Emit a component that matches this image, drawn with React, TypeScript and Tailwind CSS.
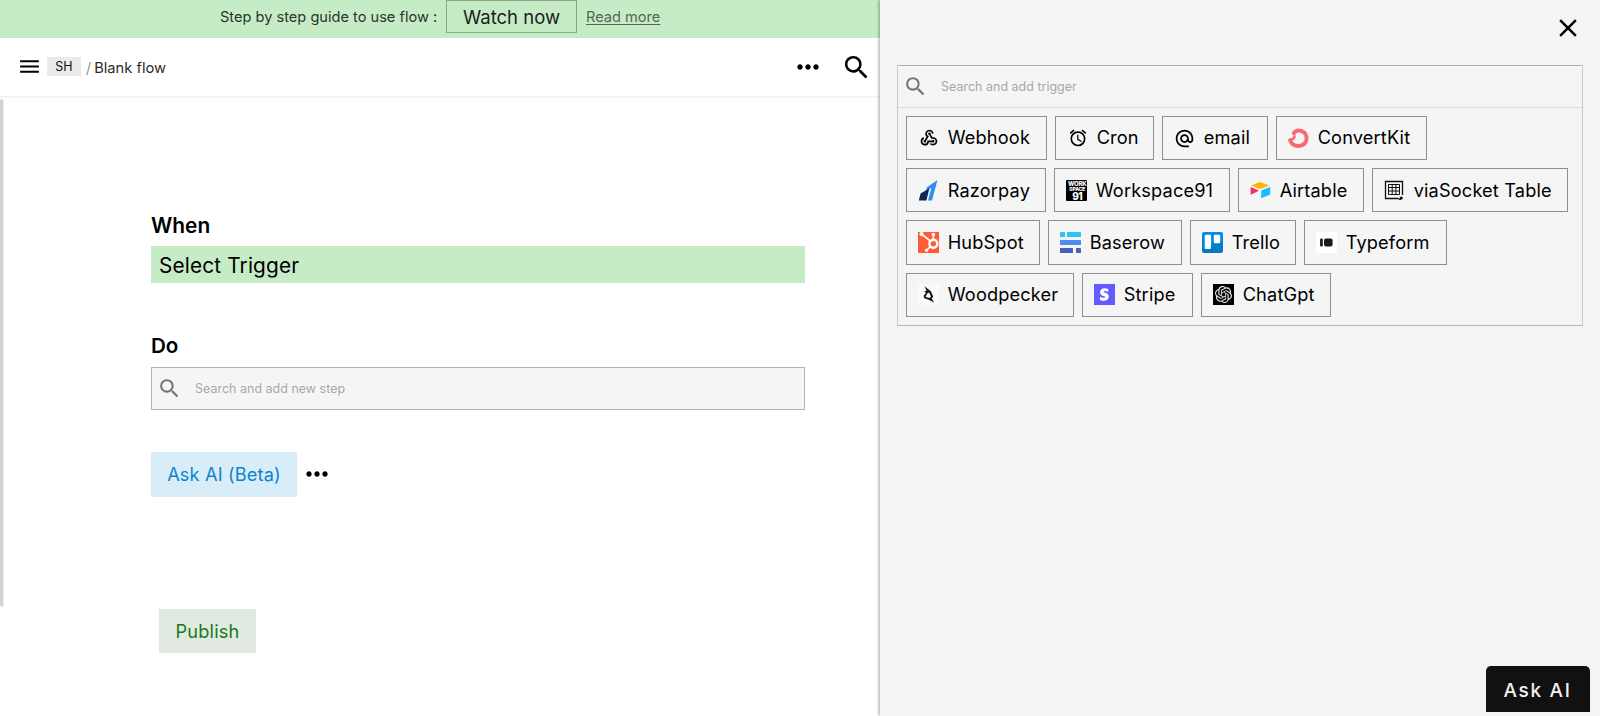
import React from "react";
import { MdMenu, MdSearch, MdMoreHoriz, MdWebhook, MdAlarm, MdAlternateEmail, MdClose } from "react-icons/md";
import { SiHubspot, SiOpenai } from "react-icons/si";

const Razorpay = () => (
  <svg viewBox="0 0 21 21" className="size-[21px]">
    <path d="M19.5 0 14 20.5H10L13.4 7.8 8 11.2 9 7.3Z" fill="#2f8ff5" />
    <path d="M2.6 13.4 11.4 8.2 8.4 20.5H0.8Z" fill="#0d2654" />
  </svg>
);

const Workspace = () => (
  <span className="flex h-[21px] w-[21px] flex-col overflow-hidden rounded-[1px] bg-black pl-[1.5px] text-white">
    <span className="mt-px h-[5px] text-[6px] leading-[6px] font-extrabold tracking-[-0.15px]">WORK</span>
    <span className="h-[5px] text-[5.2px] leading-[6px] font-extrabold tracking-[-0.2px]">SPACE</span>
    <span className="text-[10px] leading-[10px] font-extrabold tracking-[-0.5px]">91</span>
  </span>
);

const ConvertKit = () => (
  <svg viewBox="0 0 21 21" className="size-[21px]" fill="none" stroke="#fb6970" strokeLinecap="round">
    <path d="M5.9 5C7.2 3 9 2.4 10.9 2.4 15.2 2.4 18.6 5.8 18.6 10.2 18.6 14.6 15.2 18 10.8 18 6.6 18 3.2 15.6 2.2 12.2" strokeWidth="4" />
    <path d="M2 11.7C4.4 11.7 6 10.9 6.3 9" strokeWidth="2.6" />
    <path d="M5.5 5.2C6.4 6 6.7 7.5 6.5 9" strokeWidth="2" />
  </svg>
);

const Airtable = () => (
  <svg viewBox="0 0 21 21" className="size-[21px]">
    <path d="M10 2 19.3 5.4 10.3 9 1.2 5.5Z" fill="#fcb400" />
    <path d="M11.2 10.5 20.2 7V14.6L11.2 18.2Z" fill="#18bfff" />
    <path d="M0.7 7.1 9 10.7 0.7 14.7Z" fill="#f82b60" />
  </svg>
);

const SocketTable = () => (
  <svg viewBox="0 0 21 21" className="size-[21px]" fill="none" stroke="#111">
    <path d="M14.5 18.5H1.5V1.5H18.5V15" strokeWidth="1.3" />
    <path d="M4.5 4.5h11v10h-11zM4.5 7.5h11M4.5 11h11M8.2 4.5v10M11.9 4.5v10" strokeWidth="1" />
    <circle cx="17.2" cy="18" r="1.6" fill="#111" stroke="none" />
    <path d="M15 18.2v1.4h2" />
  </svg>
);

const HubSpot = () => (
  <span className="flex size-[21px] items-center justify-center bg-[#ff5c35] text-white">
    <SiHubspot size={20} />
  </span>
);

const Baserow = () => (
  <svg viewBox="0 0 21 21" className="size-[21px]">
    <rect width="5" height="5" rx=".6" fill="#2bc3f1" />
    <rect x="7" width="14" height="5" rx=".6" fill="#2bc3f1" />
    <rect y="8" width="21" height="5" rx=".6" fill="#4e8cf0" />
    <rect y="16" width="13" height="5" rx=".6" fill="#4362c0" />
    <rect x="16" y="16" width="5" height="5" rx=".6" fill="#4362c0" />
  </svg>
);

const Trello = () => (
  <svg viewBox="0 0 21 21" className="size-[21px]">
    <defs>
      <linearGradient id="trello" x1="0" y1="0" x2="0" y2="1">
        <stop stopColor="#0091e6" />
        <stop offset="1" stopColor="#0079bf" />
      </linearGradient>
    </defs>
    <rect width="21" height="21" rx="2" fill="url(#trello)" />
    <rect x="2.7" y="2.7" width="6.4" height="14.3" rx="1.2" fill="#fff" />
    <rect x="11.8" y="2.7" width="6.4" height="8.6" rx="1.2" fill="#fff" />
  </svg>
);

const Typeform = () => (
  <svg viewBox="0 0 21 21" className="size-[21px]">
    <rect width="21" height="21" fill="#fff" />
    <rect x="4.1" y="6.5" width="2.7" height="8" rx="1.3" fill="#191919" />
    <rect x="8" y="6.5" width="8.6" height="8" rx="2" fill="#191919" />
  </svg>
);

const Woodpecker = () => (
  <svg viewBox="0 0 21 21" className="size-[21px]">
    <rect width="21" height="21" fill="#fafafa" />
    <path d="M6.5 2.2 12.8 7.2 15.2 12.5 13.8 14.4 16 18.4 10.8 15.8 6.2 14.2 5.6 11.8 8 9 6.2 7.3 8.6 6.8Z" fill="#111" />
    <path d="M9.2 9.6 11.2 8.4 13 12.5 11.6 14 7.6 12.9Z" fill="#fafafa" />
  </svg>
);

const Stripe = () => (
  <svg viewBox="0 0 21 21" className="size-[21px]">
    <rect width="21" height="21" fill="#635bff" />
    <path
      d="M14.2 4.9V8C13 7.4 11.9 7.1 10.9 7.1 10.1 7.1 9.7 7.3 9.7 7.7 9.7 8.9 14.8 8.5 14.8 12.4 14.8 15.2 12.7 16.7 9.8 16.7 8.6 16.7 7.3 16.5 6 15.9V12.7C7.2 13.4 8.7 13.8 9.8 13.8 10.6 13.8 11.1 13.6 11.1 13.1 11.1 11.7 6.1 12.3 6.1 8.3 6.1 5.8 8 4.2 10.9 4.2 12 4.2 13.1 4.4 14.2 4.9Z"
      fill="#fff"
    />
  </svg>
);

const ChatGpt = () => (
  <span className="flex size-[21px] items-center justify-center bg-black text-[#eee]">
    <SiOpenai size={17} />
  </span>
);

type Chip = { name: string; width: string; icon: React.ReactNode };

const rows: Chip[][] = [
  [
    { name: "Webhook", width: "w-[141px]", icon: <MdWebhook size={20} /> },
    { name: "Cron", width: "w-[99px]", icon: <MdAlarm size={20} /> },
    { name: "email", width: "w-[106px]", icon: <MdAlternateEmail size={21} /> },
    { name: "ConvertKit", width: "w-[151px]", icon: <ConvertKit /> },
  ],
  [
    { name: "Razorpay", width: "w-[140px]", icon: <Razorpay /> },
    { name: "Workspace91", width: "w-[176px]", icon: <Workspace /> },
    { name: "Airtable", width: "w-[126px]", icon: <Airtable /> },
    { name: "viaSocket Table", width: "w-[196px]", icon: <SocketTable /> },
  ],
  [
    { name: "HubSpot", width: "w-[134px]", icon: <HubSpot /> },
    { name: "Baserow", width: "w-[134px]", icon: <Baserow /> },
    { name: "Trello", width: "w-[106px]", icon: <Trello /> },
    { name: "Typeform", width: "w-[143px]", icon: <Typeform /> },
  ],
  [
    { name: "Woodpecker", width: "w-[168px]", icon: <Woodpecker /> },
    { name: "Stripe", width: "w-[111px]", icon: <Stripe /> },
    { name: "ChatGpt", width: "w-[130px]", icon: <ChatGpt /> },
  ],
];

export default function App() {
  return (
    <div className="flex h-[716px] w-[1600px] overflow-hidden bg-white font-['Inter',sans-serif] text-[#111]">
      <main className="flex w-[880px] shrink-0 flex-col">
        <div className="flex h-[37.5px] shrink-0 items-start bg-[#c6ecc6] pl-[220px]">
          <span className="mt-[5px] w-[226px] text-[14.6px] leading-6 whitespace-nowrap text-[#2c332c]">Step by step guide to use flow :</span>
          <button className="h-[33px] w-[131px] border border-[#8ba58b] text-[18.5px] leading-[32px] whitespace-nowrap text-[#1c1c1c]">Watch now</button>
          <a className="mt-[5px] ml-[9px] text-[14.6px] leading-6 whitespace-nowrap text-[#566656] underline underline-offset-2">Read more</a>
        </div>
        <header className="flex h-[59.5px] shrink-0 items-center border-b border-[#f0f0f0] pl-[17px] pr-[8px] shadow-[0_1px_2px_rgba(0,0,0,0.04)]">
          <MdMenu size={25} color="#000" />
          <span className="ml-[5px] h-[19px] w-[34px] bg-[#ebebeb] text-center text-[12.5px] leading-[19px]">SH</span>
          <span className="mt-[2px] ml-[5px] text-[14.8px] font-light text-[#777]">/</span>
          <span className="mt-[2px] ml-[3px] text-[14.7px] whitespace-nowrap text-[#2c2c2c]">Blank flow</span>
          <MdMoreHoriz size={32} color="#000" className="ml-auto" />
          <MdSearch size={31} color="#000" className="mt-px ml-[17px]" />
        </header>
        <div className="flex flex-1">
          <div className="mt-[3px] h-[506px] w-[3px] bg-[#d2d2d2] shadow-[0_0_2px_rgba(0,0,0,0.25)]" />
          <section className="ml-[148px] w-[654px]">
            <h2 className="mt-[114px] h-[35px] text-[20.9px] leading-[30px] font-semibold text-black">When</h2>
            <div className="h-[37px] bg-[#c6ecc6] pl-2 text-[20.8px] leading-[39px] tracking-[0.15px] text-black">Select Trigger</div>
            <h2 className="mt-[48px] h-[36px] text-[20.6px] leading-[30px] font-semibold text-black">Do</h2>
            <div className="flex h-[43px] items-center border border-[#b3b3b3] bg-[#f5f5f5] pl-[5px]">
              <MdSearch size={25} color="#757575" />
              <span className="mt-[2px] ml-[13px] text-[12.5px] text-[#a8a8a8]">Search and add new step</span>
            </div>
            <div className="mt-[42px] flex items-center">
              <button className="h-[45px] w-[146px] bg-[#d9edf9] text-[18.2px] tracking-[0.14px] whitespace-nowrap text-[#0984d0]">Ask AI (Beta)</button>
              <MdMoreHoriz size={32} color="#000" className="-mt-px ml-[4px]" />
            </div>
            <button className="mt-[112px] ml-2 block h-[44px] w-[97px] bg-[#e0eae1] pt-px text-[18.2px] tracking-[0.2px] text-[#147a1c]">Publish</button>
          </section>
        </div>
      </main>
      <aside className="relative flex flex-1 flex-col bg-[#f4f4f3] pl-[17px] shadow-[-1px_0_3px_rgba(0,0,0,0.35)]">
        <div className="flex h-[65px] items-start justify-end pt-[13px] pr-[17px]">
          <MdClose size={30} color="#000" />
        </div>
        <div className="h-[261px] w-[686px] border border-[#cacaca] border-t-[#b0b0b0] border-b-[#b8b8b8] bg-[#f5f5f5]">
          <div className="flex h-[42px] items-center border-b border-[#dadada] pl-[5px]">
            <MdSearch size={25} color="#757575" />
            <span className="mt-[2px] ml-[13px] text-[12.5px] text-[#a8a8a8]">Search and add trigger</span>
          </div>
          <div className="flex flex-col gap-2 pt-2 pl-2">
            {rows.map((row, i) => (
              <div key={i} className="flex gap-2">
                {row.map((c) => (
                  <button key={c.name} className={`flex h-[44.2px] items-center border border-[#8f8f8f] pl-[11px] text-[18.2px] tracking-[0.15px] whitespace-nowrap text-black ${c.width}`}>
                    <span className="mr-[8.7px] flex w-[21px] justify-center">{c.icon}</span>
                    {c.name}
                  </button>
                ))}
              </div>
            ))}
          </div>
        </div>
        <button className="mt-auto mr-[10px] mb-[4px] h-[46px] w-[104px] self-end rounded-t-[5px] bg-[#111] pt-[4px] pr-[1px] text-[19px] font-medium tracking-[1.7px] text-[#f2f2f2]">Ask AI</button>
      </aside>
    </div>
  );
}
